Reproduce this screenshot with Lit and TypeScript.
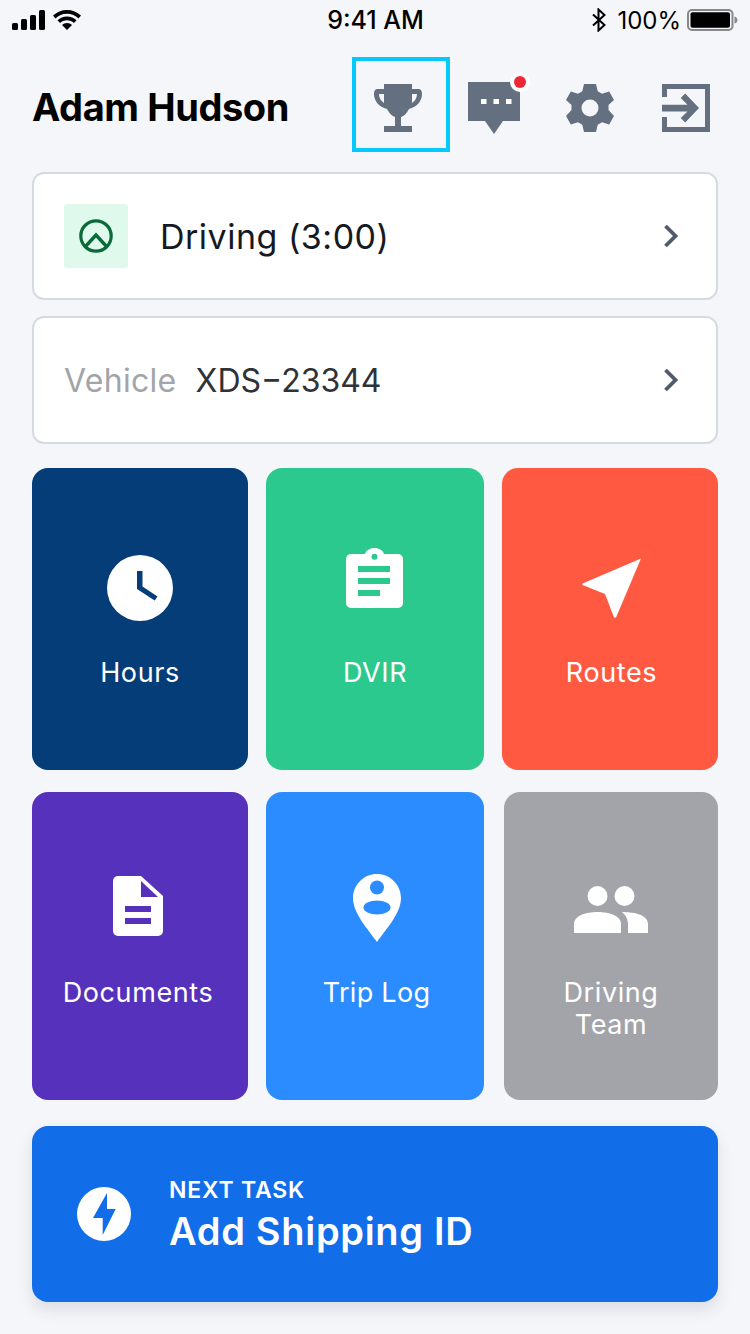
import { LitElement, html, css } from 'lit';
import { customElement } from 'lit/decorators.js';

const chevron = html`<svg class="chev" width="18" height="24" viewBox="0 0 18 24"><path d="M3.500 2 13.500 12 3.500 22" fill="none" stroke="#4f5b6b" stroke-width="3.800"/></svg>`;

const trophy = html`<svg width="50" height="48" viewBox="0 0 50 48" fill="#64707f">
  <path fill-rule="evenodd" d="M11 0H39V5H45C48 5 49 7 49 10C49 17 44 23 36 25C34 29 31 32 28 33V42H39V48H11V42H22V33C19 32 16 29 14 25C6 23 1 17 1 10C1 7 2 5 5 5H11ZM6 10C6 14 8 17 11 19V10ZM44 10C44 14 42 17 39 19V10Z"/>
</svg>`;

const chat = html`<svg width="62" height="64" viewBox="0 0 62 64">
  <path d="M0 12h52v39H35L26 64 17 51H0z" fill="#64707f"/>
  <path d="M13 29h5.500v5H13zM25.500 29H31v5h-5.500zM38 29h5.500v5H38z" fill="#fff"/>
  <circle cx="52" cy="12" r="10" fill="#fff"/>
  <circle cx="52" cy="12" r="6" fill="#ee2737"/>
</svg>`;

const gear = html`<svg width="48" height="48" viewBox="0 0 48 48">
  <path fill="#64707f" fill-rule="evenodd" d="M18 0h12l1.700 7.300 4.300 2.500 7.200-2.200L48 16l-5.500 5.100v5L48 32l-4.800 8.400-7.200-2.200-4.300 2.500L30 48H18l-1.700-7.300-4.300-2.500-7.200 2.200L0 32l5.500-5.900v-5L0 16l4.800-8.400L12 9.800l4.300-2.500zM24 15.500a8.500 8.500 0 1 0 0 17 8.500 8.500 0 0 0 0-17z"/>
</svg>`;

const exit = html`<svg width="48" height="48" viewBox="0 0 48 48" fill="#64707f">
  <path d="M0 0h48v48H0V33h5v10h38V5H5v8H0z"/>
  <path d="M0 20.800h25.500l-6.800-6.800 4.500-4.500L37 24 23.200 38.500l-4.500-4.500 6.800-6.500H0z"/>
</svg>`;

const clock = html`<svg width="66" height="66" viewBox="0 0 66 66">
  <circle cx="33" cy="33" r="33" fill="#fff"/>
  <path d="M30 16h5.500v15.500l15 10-2.800 4L30 34z" fill="#053d78"/>
</svg>`;

const clipboard = html`<svg width="57" height="60" viewBox="0 0 57 60">
  <path fill="#fff" fill-rule="evenodd" d="M5 6h14C20 2.500 24 0 28.500 0S37 2.500 38 6h14a5 5 0 0 1 5 5v44a5 5 0 0 1-5 5H5a5 5 0 0 1-5-5V11a5 5 0 0 1 5-5zM28.500 5.700a3 3 0 1 0 0 6 3 3 0 0 0 0-6z"/>
  <path fill="#2bc98d" d="M12 18h32v6H12zM12 30h32v6H12zM12 42h22v6H12z"/>
</svg>`;

const arrow = html`<svg width="62" height="62" viewBox="0 0 62 62">
  <path fill="#fff" d="M60 1.500 35 60.500H33L24 37 1.500 28V26.500Z"/>
</svg>`;

const doc = html`<svg width="50" height="60" viewBox="0 0 50 60">
  <path fill="#fff" d="M5 0h23l22 20v35a5 5 0 0 1-5 5H5a5 5 0 0 1-5-5V5a5 5 0 0 1 5-5z"/>
  <path fill="#5631bc" d="M28 5v16h17zM12 30h26v6H12zM12 42h26v6H12z"/>
</svg>`;

const pin = html`<svg width="48" height="68" viewBox="0 0 48 68">
  <path fill="#fff" d="M24 0c13 0 24 10.500 24 24 0 15-14 30-24 44C14 54 0 39 0 24 0 10.500 11 0 24 0z"/>
  <circle cx="24" cy="13.500" r="7" fill="#2b8cff"/>
  <ellipse cx="24" cy="33.500" rx="13.500" ry="7" fill="#2b8cff"/>
</svg>`;

const team = html`<svg width="74" height="48" viewBox="0 0 74 48">
  <g fill="#fff">
    <circle cx="23.500" cy="10" r="10"/>
    <circle cx="50.500" cy="10" r="10"/>
    <path d="M0 47V38c0-8 11-12 23.500-12S47 30 47 38v9z"/>
    <path d="M48 26c14 0 26 3.500 26 12v9H54V38c0-5-2.500-9-6-12z"/>
  </g>
</svg>`;

const bolt = html`<svg width="54" height="54" viewBox="0 0 54 54">
  <circle cx="27" cy="27" r="27" fill="#fff"/>
  <path fill="#116de8" d="M30 6 16 31h9.700v17L38.700 22H30z"/>
</svg>`;

const signal = html`<svg width="34" height="20" viewBox="0 0 34 20" fill="#000">
  <rect x="0" y="13" width="6" height="7" rx="1.500"/>
  <rect x="9" y="9" width="6" height="11" rx="1.500"/>
  <rect x="18" y="5" width="6" height="15" rx="1.500"/>
  <rect x="27" y="0" width="6" height="20" rx="1.500"/>
</svg>`;

const wifi = html`<svg width="28" height="20" viewBox="0 0 28 20" fill="#000">
  <path d="M14 0C8.500 0 4 2 0 5.500L2.500 8.500C5.500 5.500 9.500 3.800 14 3.800s8.500 1.700 11.500 4.700L28 5.500C24 2 19.500 0 14 0z"/>
  <path d="M14 6.500c-3.800 0-7 1.400-9.500 3.800l2.600 2.800c1.800-1.800 4.200-2.800 6.900-2.800s5.100 1 6.900 2.800l2.600-2.800C21 7.900 17.800 6.500 14 6.500z"/>
  <path d="M14 13c-2 0-3.700.7-5 2l5 5 5-5c-1.300-1.300-3-2-5-2z"/>
</svg>`;

const bt = html`<svg width="16" height="24" viewBox="0 0 16 24">
  <path d="M2 6.500 13.500 17 7.500 22.500V1.500L13.500 7 2 17.500" fill="none" stroke="#000" stroke-width="2"/>
</svg>`;

const battery = html`<svg width="52" height="22" viewBox="0 0 52 22">
  <rect x="1" y="1" width="44.500" height="20" rx="4" fill="none" stroke="#86888c" stroke-width="2"/>
  <rect x="3.500" y="3.300" width="39.500" height="15.500" rx="2" fill="#000"/>
  <path d="M47.500 7.500c2 .5 3 2 3 3.500s-1 3-3 3.500z" fill="#86888c"/>
</svg>`;

@customElement('app-root')
export class AppRoot extends LitElement {
  static styles = css`
    :host {
      display: block;
      width: 750px;
      height: 1334px;
      background: #f5f6f9;
      font-family: Inter, 'Liberation Sans', sans-serif;
      overflow: hidden;
    }
    .status {
      height: 42px;
      box-sizing: border-box;
      display: grid;
      grid-template-columns: 1fr auto 1fr;
      align-items: center;
      padding: 0 11px 2px 12px;
      font-size: 24px;
      color: #000;
    }
    .status-left { display: flex; align-items: center; gap: 7px; }
    .status-right { display: flex; align-items: center; justify-content: flex-end; }
    .time { font-size: 25px; font-weight: 500; }
    .pct { font-weight: 400; margin: 0 6px 0 10px; }
    .header {
      height: 130px;
      display: flex;
      align-items: center;
      padding: 0 40px 0 32px;
    }
    .name {
      font-size: 38px;
      font-weight: 700;
      letter-spacing: -.4px;
      color: #000;
      flex: 1;
    }
    .hi {
      width: 98px;
      height: 95px;
      box-sizing: border-box;
      border: 4px solid #05c8fd;
      display: flex;
      align-items: center;
      justify-content: center;
      padding: 7px 6px 0 0;
      margin: -5px 18px 0 0;
    }
    .chat { margin: -10px 36px 0 0; display: flex; width: 62px; }
    .gear { margin: 2px 48px 0 0; display: flex; }
    .exit { margin-top: 2px; display: flex; }
    .card {
      margin: 0 32px;
      box-sizing: border-box;
      height: 128px;
      background: #fff;
      border: 2px solid #d5dae3;
      border-radius: 12px;
      display: flex;
      align-items: center;
      padding: 0 36px 0 30px;
    }
    .card + .card { margin-top: 16px; }
    .status-chip {
      width: 64px;
      height: 64px;
      background: #dffaec;
      border-radius: 3px;
      display: flex;
      align-items: center;
      justify-content: center;
      margin-right: 32px;
    }
    .state { font-size: 34px; color: #16191f; flex: 1; letter-spacing: .5px; }
    .veh-label { font-size: 32px; color: #a2a4a9; margin-right: 19px; letter-spacing: .3px; }
    .veh { font-size: 32px; color: #2f3236; flex: 1; }
    .grid {
      margin: 24px 32px 0;
      display: grid;
      grid-template-columns: 216px 218px 216px;
      column-gap: 18px;
    }
    .grid.second { margin-top: 22px; }
    .grid.second .tile:last-child { margin-left: 2px; }
    .tile {
      border-radius: 16px;
      height: 302px;
      color: #fff;
      display: flex;
      flex-direction: column;
      align-items: center;
      box-sizing: border-box;
      font-size: 27px;
      line-height: 32px;
      letter-spacing: .6px;
      text-align: center;
    }
    .second .tile { height: 308px; }
    .tile.left { padding-right: 4px; }
    .tile.right { padding-left: 3px; letter-spacing: .3px; }
    .tile.routes { padding-left: 3px; }
    .ico { height: 72px; display: flex; align-items: center; justify-content: center; margin-top: 84px; }
    .second .ico { margin-top: 80px; }
    .ico.clip { margin: 74px 2px 10px 0; }
    .second .ico.doc { margin: 78px 0 2px; }
    .second .ico.team { margin: 82px 0 -2px; }
    .lbl { margin-top: 33px; }
    .next {
      margin: 26px 32px 0;
      height: 176px;
      border-radius: 16px;
      background: #116de8;
      box-shadow: 0 8px 16px rgba(30, 50, 80, .12);
      display: flex;
      align-items: center;
      padding-left: 45px;
      color: #fff;
    }
    .next-text { margin: 2px 0 0 38px; }
    .kicker { font-size: 23px; font-weight: 600; line-height: 28px; letter-spacing: .8px; }
    .task { font-size: 38px; font-weight: 600; line-height: 46px; letter-spacing: .7px; margin-top: 4px; }
  `;

  render() {
    return html`
      <div class="status">
        <div class="status-left">${signal}${wifi}</div>
        <div class="time">9:41 AM</div>
        <div class="status-right">${bt}<span class="pct">100%</span>${battery}</div>
      </div>
      <div class="header">
        <div class="name">Adam Hudson</div>
        <div class="hi">${trophy}</div>
        <div class="chat">${chat}</div>
        <div class="gear">${gear}</div>
        <div class="exit">${exit}</div>
      </div>
      <div class="card">
        <div class="status-chip">
          <svg width="34" height="34" viewBox="0 0 34 34">
            <circle cx="17" cy="17" r="15.200" fill="none" stroke="#0a6a3a" stroke-width="3.200"/>
            <path d="M6 28 17 16l11 12" fill="none" stroke="#0a6a3a" stroke-width="3.400"/>
          </svg>
        </div>
        <div class="state">Driving (3:00)</div>
        ${chevron}
      </div>
      <div class="card">
        <span class="veh-label">Vehicle</span>
        <span class="veh">XDS\u221223344</span>
        ${chevron}
      </div>
      <div class="grid">
        <div class="tile" style="background:#053d78"><div class="ico">${clock}</div><div class="lbl">Hours</div></div>
        <div class="tile" style="background:#2bc98d"><div class="ico clip">${clipboard}</div><div class="lbl">DVIR</div></div>
        <div class="tile routes" style="background:#ff5a41"><div class="ico">${arrow}</div><div class="lbl">Routes</div></div>
      </div>
      <div class="grid second">
        <div class="tile left" style="background:#5631bc"><div class="ico doc">${doc}</div><div class="lbl">Documents</div></div>
        <div class="tile right" style="background:#2b8cff"><div class="ico">${pin}</div><div class="lbl">Trip Log</div></div>
        <div class="tile" style="background:#a2a4a9"><div class="ico team">${team}</div><div class="lbl">Driving<br />Team</div></div>
      </div>
      <div class="next">
        ${bolt}
        <div class="next-text">
          <div class="kicker">NEXT TASK</div>
          <div class="task">Add Shipping ID</div>
        </div>
      </div>
    `;
  }
}
